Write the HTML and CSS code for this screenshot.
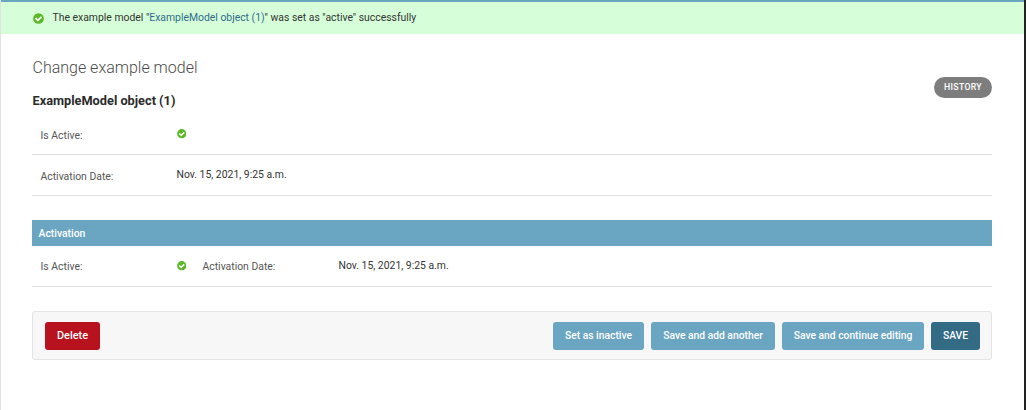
FILE: index.html
```
<!DOCTYPE html>
<html lang="en"><head><meta charset="utf-8"><title>Change example model</title>
<link rel="stylesheet" href="styles.css"></head>
<body>
<svg class="defs" width="0" height="0"><symbol id="yes" viewBox="0 0 16 16"><circle cx="8" cy="8" r="7.8" fill="#5cb829"/><path d="M3.6 7.5l3.4 3.2 5.3-5" fill="none" stroke="#fff" stroke-width="2.5"/></symbol></svg>
<div class="page">
<div class="message"><svg class="icon-message"><use href="#yes"/></svg><p>The example model "<a href="#">ExampleModel object (1)</a>" was set as "active" successfully</p></div>
<main class="content">
<header class="heading"><div><h1>Change example model</h1><h2>ExampleModel object (1)</h2></div><a class="history" href="#">HISTORY</a></header>
<section class="fields">
<div class="row row-first"><span class="label">Is Active:</span><svg class="icon"><use href="#yes"/></svg></div>
<div class="row row-date"><span class="label">Activation Date:</span><span class="value">Nov. 15, 2021, 9:25 a.m.</span></div>
</section>
<section class="module"><h3>Activation</h3>
<div class="row row-group"><span class="label">Is Active:</span><svg class="icon"><use href="#yes"/></svg><span class="label label-next">Activation Date:</span><span class="value">Nov. 15, 2021, 9:25 a.m.</span></div>
</section>
<div class="submit"><button class="delete">Delete</button><button class="b1">Set as inactive</button><button class="b2">Save and add another</button><button class="b3">Save and continue editing</button><button class="save">SAVE</button></div>
</main></div>
</body></html>
```
FILE: styles.css
```
* { box-sizing: border-box; }
body { margin: 0; font-family: Roboto, sans-serif; background: #fff; color: #333; overflow: hidden; }
.defs { position: absolute; }
.page { height: 410px; border-left: 1px solid #e2e2e2; border-right: 2px solid #222; background: linear-gradient(#6aa5c1, #6aa5c1) top / 100% 2px no-repeat; padding-top: 2px; }
.message { height: 32px; background: #d6ffd9; display: flex; align-items: center; padding-left: 32px; gap: 8.5px; font-size: 10.4px; }
.message p { margin: 0; padding-bottom: 2px; }
.message a { color: #306b8c; text-decoration: none; }
.icon-message { width: 11px; height: 11px; margin-top: 1px; }
.content { padding: 24px 32px 0 31px; }
.heading { display: flex; justify-content: space-between; height: 57px; }
h1 { margin: 0 0 0 .5px; font-size: 16px; line-height: 20px; font-weight: 300; color: #4c4c4c; }
h2 { margin: 15px 0 0 .5px; font-size: 12.75px; line-height: 16px; font-weight: 700; color: #2b2b2b; }
.history { margin-top: 19px; width: 58px; height: 21px; border-radius: 11px; background: #7d7d7d; color: #fff; font-size: 8.7px; letter-spacing: .35px; font-weight: 500; line-height: 20px; text-align: center; text-decoration: none; }
.row { display: flex; align-items: center; height: 41px; border-bottom: 1px solid #e0e0e0; padding-left: 8.5px; font-size: 10.4px; }
.row-first { height: 40px; }
.label { width: 136px; color: #555; padding-top: 2px; }
.row-group .label { padding-top: 0; }
.value { padding-bottom: 2px; }
.icon { width: 9.5px; height: 9.5px; }
.row-first .icon { margin-bottom: 1px; }
.label-next { margin-left: 16.5px; }
.module { margin-top: 24px; }
h3 { margin: 0; height: 26px; background: #6aa5c1; color: #fff; font-size: 10.4px; font-weight: 500; line-height: 27px; padding-left: 6.5px; }
.submit { margin-top: 24px; height: 49px; display: flex; align-items: center; gap: 7px; background: #f7f7f7; border: 1px solid #e4e4e4; border-radius: 3px; padding: 0 11px 0 12px; }
button { height: 28px; border: 0; border-radius: 3px; padding: 0; background: #6aa5c1; color: #fff; font: 500 10.3px Roboto, sans-serif; }
.delete { width: 55px; background: #b8121e; margin-right: auto; font-size: 10.9px; }
.b1 { width: 91px; } .b2 { width: 124px; } .b3 { width: 142px; }
.save { width: 49px; background: #336b85; }
```
